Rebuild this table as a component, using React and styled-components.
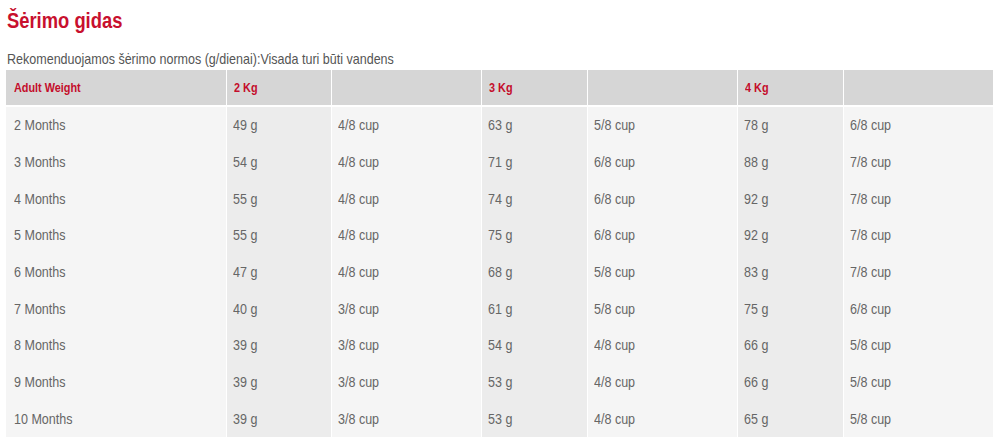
import React from "react";
import styled, { createGlobalStyle } from "styled-components";

const Global = createGlobalStyle`
  html, body { margin: 0; padding: 0; background: #fff; }
  body { font-family: "Liberation Sans", Arial, sans-serif; }
`;

const Page = styled.div`
  padding: 6px 2px 0 6px;
`;

/* The reference uses a narrow Arial; emulate it by condensing real text. */
const Narrow = styled.span`
  display: inline-block;
  white-space: nowrap;
  transform: scaleX(0.835);
  transform-origin: left center;
`;

const Title = styled.h2`
  margin: 0 0 0 1px;
  font-size: 22px;
  line-height: 30px;
  font-weight: bold;
  color: #c8102e;
`;

const Intro = styled.p`
  margin: 13px 0 2px 1px;
  font-size: 15px;
  line-height: 19px;
  color: #555;
`;

const Grid = styled.div`
  display: grid;
  grid-template-columns: 220px 104px 149px 105px 149px 105px 149px;
  grid-template-rows: 36.5px;
  grid-auto-rows: 36.7px;
  column-gap: 1px;
  width: 987px;
`;

const HeadCell = styled.div`
  background: #d6d6d6;
  color: #c40d2b;
  font-weight: bold;
  font-size: 13px;
  display: flex;
  align-items: center;
  padding-left: ${(p) => (p.$first ? "8px" : "7px")};
  margin-bottom: 2px;
`;

const Cell = styled.div`
  background: ${(p) => (p.$shade ? "#ececec" : "#f5f5f5")};
  color: #666;
  font-size: 15px;
  display: flex;
  align-items: center;
  padding-left: ${(p) => (p.$first ? "8px" : "6px")};
`;

const rows = [
  ["2 Months", "49 g", "4/8 cup", "63 g", "5/8 cup", "78 g", "6/8 cup"],
  ["3 Months", "54 g", "4/8 cup", "71 g", "6/8 cup", "88 g", "7/8 cup"],
  ["4 Months", "55 g", "4/8 cup", "74 g", "6/8 cup", "92 g", "7/8 cup"],
  ["5 Months", "55 g", "4/8 cup", "75 g", "6/8 cup", "92 g", "7/8 cup"],
  ["6 Months", "47 g", "4/8 cup", "68 g", "5/8 cup", "83 g", "7/8 cup"],
  ["7 Months", "40 g", "3/8 cup", "61 g", "5/8 cup", "75 g", "6/8 cup"],
  ["8 Months", "39 g", "3/8 cup", "54 g", "4/8 cup", "66 g", "5/8 cup"],
  ["9 Months", "39 g", "3/8 cup", "53 g", "4/8 cup", "66 g", "5/8 cup"],
  ["10 Months", "39 g", "3/8 cup", "53 g", "4/8 cup", "65 g", "5/8 cup"],
];

const head = ["Adult Weight", "2 Kg", "", "3 Kg", "", "4 Kg", ""];

export default function App() {
  return (
    <Page>
      <Global />
      <Title>
        <Narrow>Šėrimo gidas</Narrow>
      </Title>
      <Intro>
        <Narrow>Rekomenduojamos šėrimo normos (g/dienai):Visada turi būti vandens</Narrow>
      </Intro>
      <Grid>
        {head.map((h, i) => (
          <HeadCell key={"h" + i} $first={i === 0}>
            {h && <Narrow>{h}</Narrow>}
          </HeadCell>
        ))}
        {rows.map((r, ri) =>
          r.map((c, ci) => (
            <Cell key={ri + "-" + ci} $first={ci === 0} $shade={ci % 2 === 1}>
              <Narrow>{c}</Narrow>
            </Cell>
          ))
        )}
      </Grid>
    </Page>
  );
}
